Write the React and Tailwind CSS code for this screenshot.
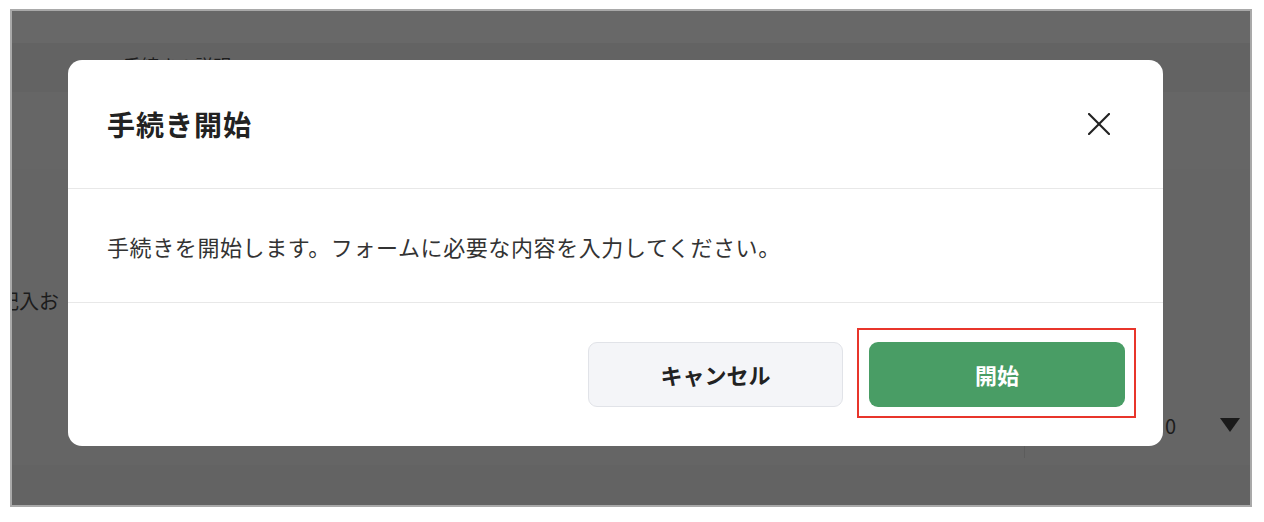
import React from "react";

const JP = { fontFamily: '"Noto Sans CJK JP", "Noto Sans", sans-serif' };

export default function App() {
  return (
    <div className="w-[1264px] h-[522px] bg-white" style={JP}>
      <div className="pl-[10px] pt-[9px]">
        <div className="relative w-[1242px] h-[498px] border-2 border-[#a9a9a9] overflow-hidden bg-[#666666] flex flex-col">
          {/* underlying page (dimmed) */}
          <div className="h-[32px] bg-[#686868] shrink-0" />
          <div className="h-[49px] bg-[#636363] shrink-0 relative">
            <div className="pl-[111px] pt-[10px] text-[18px] leading-[24px] text-[#1d1d1d]">手続きの説明</div>
          </div>
          <div className="h-[77px] bg-[#666666] shrink-0" />
          <div className="flex-1 bg-[#656565] flex flex-col">
            <div className="h-[118px]" />
            <div className="-ml-[13px] text-[20px] leading-[28px] text-[#1c1c1c]">記入お</div>
            <div className="h-[93px]" />
            <div className="flex items-center justify-end h-[36px] pr-[10px] gap-[44px]">
              <div className="h-[28px] w-px bg-[#5c5c5c] mr-[96px] translate-y-[18px]" />
              <span className="text-[20px] text-[#1c1c1c]">0</span>
              <svg width="20" height="14" viewBox="0 0 20 14" className="mt-[-2px]">
                <polygon points="0,0 20,0 10,14" fill="#1a1a1a" />
              </svg>
            </div>
            <div className="flex-1" />
          </div>
          <div className="h-[40px] bg-[#636363] shrink-0" />

          {/* modal */}
          <div className="absolute left-[56px] top-[49px] w-[1095px] h-[386px] bg-white rounded-[14px] flex flex-col">
            <div className="h-[129px] border-b border-[#e8e8e8] flex items-center justify-between pl-[39px] pr-[53px] shrink-0">
              <h2 className="text-[28px] font-bold text-[#222] leading-none tracking-[1px]">手続き開始</h2>
              <svg width="22" height="22" viewBox="0 0 22 22" fill="none" stroke="#222" strokeWidth="2.2" strokeLinecap="round">
                <line x1="1" y1="1" x2="21" y2="21" />
                <line x1="21" y1="1" x2="1" y2="21" />
              </svg>
            </div>
            <div className="h-[114px] border-b border-[#e8e8e8] flex items-center pl-[39px] shrink-0">
              <p className="text-[22px] leading-none text-[#333] tracking-[0.6px]">手続きを開始します。フォームに必要な内容を入力してください。</p>
            </div>
            <div className="flex-1 flex items-center justify-end gap-[26px] pr-[38px]">
              <button className="w-[255px] h-[65px] rounded-[9px] bg-[#f4f5f8] border border-[#e1e3e8] text-[22px] font-bold text-[#222]">
                キャンセル
              </button>
              <div className="relative">
                <div className="absolute -left-[12px] -right-[11px] -top-[14px] -bottom-[11px] border-2 border-[#e8352b]" />
                <button className="relative w-[256px] h-[65px] rounded-[9px] bg-[#499d65] text-[22px] font-bold text-white">
                  開始
                </button>
              </div>
            </div>
          </div>
        </div>
      </div>
    </div>
  );
}
